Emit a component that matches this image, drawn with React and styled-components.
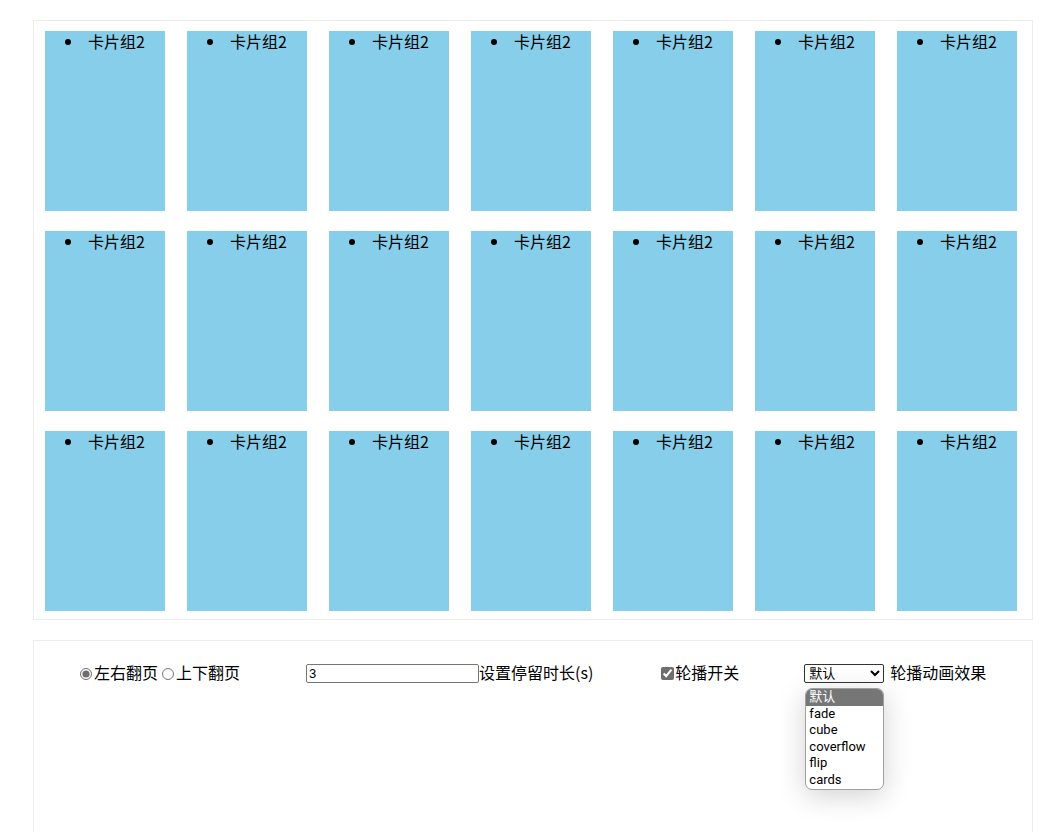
import React from "react";
import styled, { createGlobalStyle } from "styled-components";

const GlobalStyle = createGlobalStyle`
  body {
    margin: 0;
    background: #fff;
    font-family: "Noto Sans CJK SC", "Microsoft YaHei", sans-serif;
    font-size: 16px;
    color: #000;
  }
`;

const Page = styled.div`
  padding: 20px 0 0 33px;
  height: 832px;
  box-sizing: border-box;
  overflow: hidden;
`;

const Panel = styled.div`
  width: 1000px;
  box-sizing: border-box;
  border: 1px solid #ededed;
  padding: 10px 0 8px 11px;
  display: grid;
  grid-template-columns: repeat(7, 120px);
  grid-auto-rows: 180px;
  column-gap: 22px;
  row-gap: 20px;
`;

const Card = styled.div`
  background: #87ceeb;
  ul {
    margin: 0;
    padding-left: 43px;
    list-style: none;
    line-height: 21px;
  }
  li {
    position: relative;
  }
  li::before {
    content: "";
    position: absolute;
    left: -23px;
    top: 8px;
    width: 6px;
    height: 6px;
    border-radius: 50%;
    background: #000;
  }
`;

const Settings = styled.div`
  margin-top: 20px;
  width: 1000px;
  height: 300px;
  box-sizing: border-box;
  border: 1px solid #ededed;
  padding: 22px 0 0 46px;
`;

const Row = styled.div`
  display: flex;
  align-items: center;
  height: 21px;
`;

const Group = styled.div`
  display: flex;
  align-items: center;
  margin-left: ${(p) => p.$gap || 0}px;
`;

const Label = styled.span`
  line-height: 21px;
  position: relative;
  top: -1px;
  margin-left: ${(p) => p.$gap || 0}px;
`;

const Radio = styled.input.attrs({ type: "radio" })`
  width: 12px;
  height: 12px;
  margin: 0 ${(p) => p.$after || 0}px 0 ${(p) => p.$before || 0}px;
  accent-color: #6e6e6e;
`;

const Check = styled.input.attrs({ type: "checkbox" })`
  width: 13px;
  height: 13px;
  margin: 0 1px 0 0;
  accent-color: #6e6e6e;
`;

const TextInput = styled.input`
  width: 173px;
  height: 19px;
  box-sizing: border-box;
  margin: 0;
  padding: 0 2px;
  border: 1px solid #767676;
  border-radius: 2px;
  font-family: "Liberation Sans", Arial, sans-serif;
  font-size: 13px;
`;

const SelectWrap = styled.div`
  position: relative;
  display: flex;
  align-items: center;
`;

const Select = styled.select`
  width: 80px;
  height: 19px;
  box-sizing: border-box;
  margin: 0 6px 0 0;
  padding: 0;
  border: 1px solid #333;
  border-radius: 2px;
  background: #fff;
  font-family: "Liberation Sans", "Noto Sans CJK SC", sans-serif;
  font-size: 13px;
  line-height: normal;
`;

const Dropdown = styled.div`
  position: absolute;
  left: 1px;
  top: 24px;
  width: 79px;
  box-sizing: border-box;
  border: 1px solid #a0a0a0;
  border-radius: 7px;
  overflow: hidden;
  background: #fff;
  box-shadow: 0 6px 28px rgba(0, 0, 0, 0.18);
  font-family: "Roboto", "Noto Sans CJK SC", sans-serif;
  font-size: 13px;
  padding-bottom: 1px;
`;

const Option = styled.div`
  height: 16.5px;
  line-height: 16.5px;
  padding-left: 3px;
  background: ${(p) => (p.$active ? "#767676" : "transparent")};
  color: ${(p) => (p.$active ? "#fff" : "#000")};
  white-space: nowrap;
`;

const options = ["默认", "fade", "cube", "coverflow", "flip", "cards"];

export default function App() {
  const cards = Array.from({ length: 21 });
  return (
    <Page>
      <GlobalStyle />
      <Panel>
        {cards.map((_, i) => (
          <Card key={i}>
            <ul>
              <li>卡片组2</li>
            </ul>
          </Card>
        ))}
      </Panel>
      <Settings>
        <Row>
          <Group>
            <Radio name="dir" defaultChecked $after={2} />
            <Label>左右翻页</Label>
            <Radio name="dir" $before={4} $after={2} />
            <Label>上下翻页</Label>
          </Group>
          <Group $gap={66}>
            <TextInput type="text" defaultValue="3" />
            <Label>设置停留时长(s)</Label>
          </Group>
          <Group $gap={68}>
            <Check defaultChecked />
            <Label>轮播开关</Label>
          </Group>
          <Group $gap={65}>
            <SelectWrap>
              <Select defaultValue="默认">
                {options.map((o) => (
                  <option key={o} value={o}>
                    {o}
                  </option>
                ))}
              </Select>
              <Dropdown>
                {options.map((o, i) => (
                  <Option key={o} $active={i === 0}>
                    {o}
                  </Option>
                ))}
              </Dropdown>
            </SelectWrap>
            <Label>轮播动画效果</Label>
          </Group>
        </Row>
      </Settings>
    </Page>
  );
}
